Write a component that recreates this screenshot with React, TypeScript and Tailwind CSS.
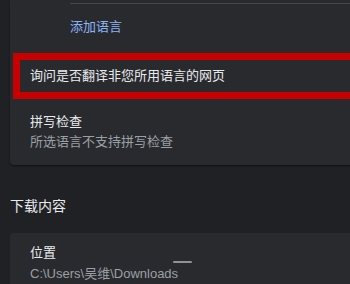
import React from "react";

const font = {
  fontFamily: '"Liberation Sans", "Noto Sans CJK SC", sans-serif',
};

export default function App() {
  return (
    <div
      className="w-[350px] h-[284px] overflow-hidden bg-[#202124] pl-[10px]"
      style={font}
    >
      {/* languages card */}
      <div className="w-[360px] bg-[#292a2d] rounded-bl-[4px] shadow-[0_1px_2px_rgba(0,0,0,0.5)]">
        <div className="h-[3px]" />
        <div className="h-px ml-[60px] bg-[#46474a]" />
        <div className="h-[45px] flex items-center pl-[60px] text-[13px] text-[#8ab4f8]">
          添加语言
        </div>
        <div className="mt-[4px] ml-[3px] h-[46px] border-[7px] border-[#c80000] flex items-center pl-[10px] text-[13px] text-[#e8eaed]">
          询问是否翻译非您所用语言的网页
        </div>
        <div className="pt-[13px] pb-[13px] pl-[20px] text-[13px] leading-[20px]">
          <div className="text-[#e8eaed]">拼写检查</div>
          <div className="text-[#9aa0a6]">所选语言不支持拼写检查</div>
        </div>
      </div>

      {/* downloads */}
      <div className="mt-[31px] text-[14px] leading-[20px] text-[#e8eaed]">
        下载内容
      </div>
      <div className="relative mt-[17px] w-[360px] h-[80px] bg-[#292a2d] rounded-t-[4px] pt-[10px] pl-[20px] text-[13px] leading-[20px]">
        <div className="text-[#e8eaed]">位置</div>
        <div className="mt-px text-[#9aa0a6]">C:\Users\吴维\Downloads</div>
        <div className="absolute left-[163px] top-[28px] w-[19px] h-[2px] rounded-full bg-[#bdbdbd]/70" />
      </div>
    </div>
  );
}
